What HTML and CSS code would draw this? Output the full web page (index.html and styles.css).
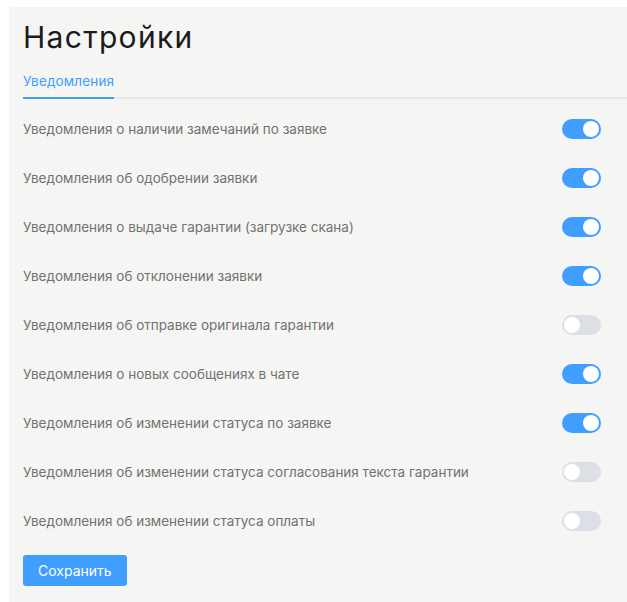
FILE: index.html
```html
<!DOCTYPE html>
<html lang="ru">
<head>
<meta charset="utf-8">
<title>Настройки</title>
<link rel="stylesheet" href="styles.css">
</head>
<body>
<main class="panel">
  <h1 class="title">Настройки</h1>
  <div class="tabs">
    <span class="tab tab--active">Уведомления</span>
  </div>
  <ul class="settings">
    <li class="row"><span class="label">Уведомления о наличии замечаний по заявке</span><span class="switch switch--on"></span></li>
    <li class="row"><span class="label">Уведомления об одобрении заявки</span><span class="switch switch--on"></span></li>
    <li class="row"><span class="label">Уведомления о выдаче гарантии (загрузке скана)</span><span class="switch switch--on"></span></li>
    <li class="row"><span class="label">Уведомления об отклонении заявки</span><span class="switch switch--on"></span></li>
    <li class="row"><span class="label">Уведомления об отправке оригинала гарантии</span><span class="switch"></span></li>
    <li class="row"><span class="label">Уведомления о новых сообщениях в чате</span><span class="switch switch--on"></span></li>
    <li class="row"><span class="label">Уведомления об изменении статуса по заявке</span><span class="switch switch--on"></span></li>
    <li class="row"><span class="label">Уведомления об изменении статуса согласования текста гарантии</span><span class="switch"></span></li>
    <li class="row"><span class="label">Уведомления об изменении статуса оплаты</span><span class="switch"></span></li>
  </ul>
  <button class="btn-primary" type="button">Сохранить</button>
</main>
</body>
</html>
```

FILE: styles.css
```css
html, body {
  margin: 0;
  height: 100%;
}

body {
  padding: 7px 0 0 9px;
  box-sizing: border-box;
  background: #ffffff;
  font-family: Inter, "Noto Sans", sans-serif;
  overflow: hidden;
}

.panel {
  height: calc(100vh - 7px);
  box-sizing: border-box;
  background: #f5f5f4;
  padding: 12px 0 0 14px;
}

.title {
  margin: 0;
  font-size: 30px;
  line-height: 36px;
  font-weight: 400;
  color: #1b1b1b;
  letter-spacing: 1.3px;
}

.tabs {
  margin-top: 18px;
  border-bottom: 2px solid #e4e7ed;
  display: flex;
}

.tab {
  font-size: 13.5px;
  line-height: 16px;
  letter-spacing: 0.15px;
  padding-bottom: 8px;
  margin-bottom: -2px;
  color: #606266;
}

.tab--active {
  color: #409eff;
  border-bottom: 2px solid #409eff;
}

.settings {
  list-style: none;
  margin: 5px 26px 0 0;
  padding: 0;
}

.row {
  height: 49px;
  display: flex;
  align-items: center;
  justify-content: space-between;
}

.label {
  font-size: 13.5px;
  color: #727272;
}

.switch {
  position: relative;
  width: 39px;
  height: 20px;
  border-radius: 10px;
  background: #dcdfe6;
  flex: none;
}

.switch::after {
  content: "";
  position: absolute;
  top: 2px;
  left: 2px;
  width: 16px;
  height: 16px;
  border-radius: 50%;
  background: #ffffff;
}

.switch--on {
  background: #409eff;
}

.switch--on::after {
  left: 21px;
}

.btn-primary {
  margin-top: 10px;
  height: 31px;
  padding: 0 15px;
  border: none;
  border-radius: 3px;
  background: #409eff;
  color: #ffffff;
  font-family: inherit;
  font-size: 14px;
  cursor: pointer;
}
```
